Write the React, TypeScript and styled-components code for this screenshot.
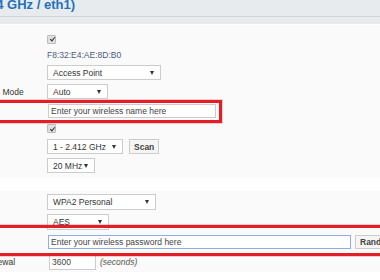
import React from "react";
import styled, { createGlobalStyle } from "styled-components";

const GlobalStyle = createGlobalStyle`
  html, body {
    margin: 0;
    padding: 0;
    background: #ffffff;
    overflow: hidden;
  }
  body {
    font-family: "Liberation Sans", Arial, sans-serif;
    font-size: 8.5px;
    color: #333333;
  }
`;

const App: React.FC = () => {
  return (
    <>
      <GlobalStyle />
      <Page>
        <SectionHead>
          <TitleBar>
            <Title>Wireless Interface (2.4 GHz / eth1)</Title>
          </TitleBar>
        </SectionHead>

        <Panel $top={6} $bottom={3}>
          <Row>
            <Label>Enable Wireless</Label>
            <Field>
              <Check />
            </Field>
          </Row>
          <Row>
            <Label>MAC Address</Label>
            <Field>
              <Mac>F8:32:E4:AE:8D:B0</Mac>
            </Field>
          </Row>
          <Row $h={19}>
            <Label>Wireless Mode</Label>
            <Field>
              <Select $w={114}>
                <span>Access Point</span>
                <Caret />
              </Select>
            </Field>
          </Row>
          <Row $h={19}>
            <Label>Wireless Network Mode</Label>
            <Field>
              <Select $w={61}>
                <span>Auto</span>
                <Caret />
              </Select>
            </Field>
          </Row>
          <Row $h={19}>
            <Label>SSID</Label>
            <Field>
              <InputWrap>
                <TextInput $w={168}>Enter your wireless name here</TextInput>
                <Highlight $top={-4} $bottom={-5} $right={-6} />
              </InputWrap>
            </Field>
          </Row>
          <Row $h={17}>
            <Label>Broadcast</Label>
            <Field>
              <Check />
            </Field>
          </Row>
          <Row $h={19}>
            <Label>Channel</Label>
            <Field>
              <Select $w={76}>
                <span>1 - 2.412 GHz</span>
                <Caret />
              </Select>
              <Button>Scan</Button>
            </Field>
          </Row>
          <Row $h={19}>
            <Label>Channel Width</Label>
            <Field>
              <Select $w={48}>
                <span>20 MHz</span>
                <Caret />
              </Select>
            </Field>
          </Row>
        </Panel>

        <Panel $top={1} $bottom={0} $gap={13}>
          <Row $h={20}>
            <Label>Security</Label>
            <Field>
              <Select $w={109} $h={16}>
                <span>WPA2 Personal</span>
                <Caret />
              </Select>
            </Field>
          </Row>
          <Row $h={20}>
            <Label>Encryption</Label>
            <Field>
              <Select $w={62} $h={16}>
                <span>AES</span>
                <Caret />
              </Select>
            </Field>
          </Row>
          <Row $h={20}>
            <Label>Shared Key</Label>
            <Field>
              <InputWrap>
                <TextInput $w={303} $focus>
                  Enter your wireless password here
                </TextInput>
                <Highlight $top={-10} $bottom={-7} $right={-60} />
              </InputWrap>
              <Button $wide>Random</Button>
            </Field>
          </Row>
          <Row $h={20}>
            <Label $indent={5}>Group Key Renewal</Label>
            <Field>
              <TextInput $w={47} $h={15}>3600</TextInput>
              <Hint>(seconds)</Hint>
            </Field>
          </Row>
        </Panel>
      </Page>
    </>
  );
};

const Page = styled.div`
  width: 380px;
  height: 280px;
  overflow: hidden;
  background: #ffffff;
`;

const SectionHead = styled.div`
  height: 24px;
  background: #e8ebee;
`;

const TitleBar = styled.div`
  height: 17px;
  box-sizing: border-box;
  border-bottom: 1px solid #cfd4d8;
  overflow: hidden;
`;

const Title = styled.div`
  width: 75px;
  display: flex;
  justify-content: flex-end;
  white-space: nowrap;
  font-size: 13px;
  font-weight: 700;
  line-height: 14px;
  margin-top: -2px;
  color: #2272bb;
`;

const Panel = styled.div<{ $top: number; $bottom: number; $gap?: number }>`
  background: #fafafa;
  padding: ${(p) => p.$top}px 0 ${(p) => p.$bottom}px;
  margin-top: ${(p) => p.$gap ?? 1}px;
  display: flex;
  flex-direction: column;
`;

const Row = styled.div<{ $h?: number }>`
  display: grid;
  grid-template-columns: 113px 1fr;
  align-items: center;
  height: ${(p) => p.$h ?? 16}px;
  margin-left: -66px;
`;

const Label = styled.div<{ $indent?: number }>`
  white-space: nowrap;
  color: #333333;
  font-size: 8.5px;
  padding-left: ${(p) => p.$indent ?? 0}px;
`;

const Field = styled.div`
  display: flex;
  align-items: center;
  gap: 5px;
  white-space: nowrap;
`;

const Check = styled.span`
  width: 9px;
  height: 9px;
  box-sizing: border-box;
  border: 1px solid #bdbdbd;
  border-radius: 1px;
  background: #dfdfdf;
  position: relative;
  &::after {
    content: "";
    position: absolute;
    left: 2.5px;
    top: 0.5px;
    width: 2px;
    height: 4px;
    border: solid #333;
    border-width: 0 1.4px 1.4px 0;
    transform: rotate(40deg);
  }
`;

const Mac = styled.span`
  color: #4b5a80;
  font-size: 8.5px;
`;

const Select = styled.div<{ $w: number; $h?: number }>`
  width: ${(p) => p.$w}px;
  height: ${(p) => p.$h ?? 15}px;
  box-sizing: border-box;
  border: 1px solid #cccccc;
  background: #ffffff;
  display: flex;
  align-items: center;
  justify-content: space-between;
  padding: 0 6px 0 5px;
  color: #333333;
  font-size: 8.5px;
`;

const Caret = styled.span`
  width: 0;
  height: 0;
  border-left: 2.5px solid transparent;
  border-right: 2.5px solid transparent;
  border-top: 4px solid #333333;
`;

const InputWrap = styled.div`
  position: relative;
  display: flex;
  margin-left: 1px;
`;

const TextInput = styled.div<{ $w: number; $h?: number; $focus?: boolean }>`
  width: ${(p) => p.$w}px;
  height: ${(p) => p.$h ?? 14}px;
  box-sizing: border-box;
  border: 1px solid ${(p) => (p.$focus ? "#8eaee8" : "#cccccc")};
  background: #ffffff;
  display: flex;
  align-items: center;
  padding-left: 2px;
  color: #444444;
  font-size: 8.5px;
  margin-left: ${(p) => (p.$h ? 2 : 0)}px;
`;

const Highlight = styled.div<{ $top: number; $bottom: number; $right: number }>`
  position: absolute;
  left: -300px;
  right: ${(p) => p.$right}px;
  top: ${(p) => p.$top}px;
  bottom: ${(p) => p.$bottom}px;
  border: 3px solid #e41e27;
  box-shadow: 0 0 0 1px rgba(228, 30, 39, 0.22);
  pointer-events: none;
`;

const Button = styled.div<{ $wide?: boolean }>`
  box-sizing: border-box;
  border: 1px solid #cccccc;
  background: #f5f5f5;
  display: flex;
  align-items: center;
  padding: 0 4px;
  font-weight: 700;
  color: #444444;
  font-size: 8.5px;
  margin-left: ${(p) => (p.$wide ? -1 : 1)}px;
  height: ${(p) => (p.$wide ? 14 : 15)}px;
`;

const Hint = styled.span`
  font-style: italic;
  color: #555555;
  font-size: 8.5px;
  margin-left: -1px;
`;

export default App;
